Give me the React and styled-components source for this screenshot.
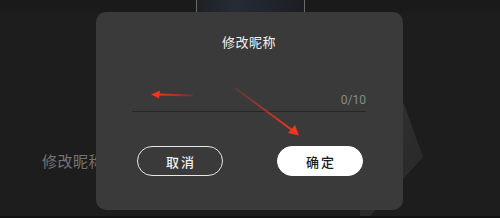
import React from 'react'
import styled, { createGlobalStyle } from 'styled-components'

const Global = createGlobalStyle`
  html, body { margin: 0; padding: 0; background: #1c1c1c; }
  body { font-family: "Noto Sans CJK SC", "Noto Sans", sans-serif; }
`

const Screen = styled.div`
  position: relative;
  width: 500px;
  height: 218px;
  overflow: hidden;
  background: #1d1d1d;
  border-bottom: 2px solid #121212;
  box-sizing: border-box;
`

const TopStrip = styled.div`
  height: 12px;
  display: flex;
  justify-content: center;
  background: #1a1a1a;
`

const Preview = styled.div`
  width: 107px;
  height: 12px;
  border-left: 1px solid #6a6a6a;
  border-right: 1px solid #6a6a6a;
  background: linear-gradient(90deg, #1e2024 0%, #262b35 35%, #222630 60%, #1c1e22 100%);
`

const PageBody = styled.div`
  padding: 140px 0 0 42px;
`

const PageLabel = styled.div`
  font-size: 15px;
  line-height: 18px;
  color: #747474;
  letter-spacing: 0.5px;
`

const Watermark = styled.svg`
  position: absolute;
  left: 0;
  top: 0;
`

const Dialog = styled.div`
  position: absolute;
  left: 96px;
  top: 12px;
  width: 307px;
  height: 198px;
  border-radius: 10px;
  background: #3a3a3a;
  box-sizing: border-box;
  display: flex;
  flex-direction: column;
  align-items: stretch;
  padding: 21px 37px 0 36px;
`

const Title = styled.div`
  text-align: center;
  font-size: 13px;
  color: #f2f2f2;
  line-height: 18px;
  letter-spacing: 0.5px;
`

const InputRow = styled.div`
  margin-top: 38px;
  height: 22px;
  border-bottom: 1px solid #262626;
  display: flex;
  justify-content: flex-end;
  align-items: center;
`

const Counter = styled.span`
  font-family: "Roboto", "Noto Sans", sans-serif;
  font-size: 12px;
  color: #8a8a8a;
`

const Buttons = styled.div`
  margin-top: 34px;
  display: flex;
  justify-content: space-between;
  padding: 0 3px 0 5px;
`

const Btn = styled.button`
  width: 86px;
  height: 30px;
  border-radius: 15px;
  box-sizing: border-box;
  font-family: "Noto Sans CJK SC", sans-serif;
  font-size: 13px;
  font-weight: 500;
  letter-spacing: 2px;
  padding: 0 0 0 2px;
  cursor: pointer;
  border: 1.5px solid ${p => (p.primary ? '#fff' : '#e8e8e8')};
  background: ${p => (p.primary ? '#ffffff' : 'transparent')};
  color: ${p => (p.primary ? '#1a1a1a' : '#f2f2f2')};
`

const Arrows = styled.svg`
  position: absolute;
  left: 0;
  top: 0;
  pointer-events: none;
`

export default function App() {
  return (
    <>
      <Global />
      <Screen>
        <TopStrip>
          <Preview />
        </TopStrip>
        <Watermark width="500" height="218">
          <defs>
            <linearGradient id="wm" x1="0" y1="0" x2="1" y2="1">
              <stop offset="0" stopColor="#343434" />
              <stop offset="1" stopColor="#262626" />
            </linearGradient>
          </defs>
          <polygon points="398,100 404,104 423,157 368,218 360,218 360,160" fill="url(#wm)" />
        </Watermark>
        <PageBody>
          <PageLabel>修改昵称</PageLabel>
        </PageBody>
        <Dialog>
          <Title>修改昵称</Title>
          <InputRow>
            <Counter>0/10</Counter>
          </InputRow>
          <Buttons>
            <Btn>取消</Btn>
            <Btn primary>确定</Btn>
          </Buttons>
        </Dialog>
        <Arrows width="500" height="218">
          <defs>
            <linearGradient id="a1" x1="1" y1="0" x2="0" y2="0">
              <stop offset="0" stopColor="#e8321c" stopOpacity="0.2" />
              <stop offset="1" stopColor="#f2351c" />
            </linearGradient>
            <linearGradient id="a2" x1="0" y1="0" x2="1" y2="1">
              <stop offset="0" stopColor="#e8321c" stopOpacity="0.2" />
              <stop offset="1" stopColor="#f2351c" />
            </linearGradient>
          </defs>
          <line x1="193" y1="95.5" x2="158" y2="94.5" stroke="url(#a1)" strokeWidth="2" />
          <polygon points="151,94.5 160,90.5 159,98.5" fill="#f2351c" />
          <line x1="235" y1="88" x2="292" y2="130" stroke="url(#a2)" strokeWidth="2" />
          <polygon points="299,135.5 288,133 295,125" fill="#f2351c" />
        </Arrows>
      </Screen>
    </>
  )
}
